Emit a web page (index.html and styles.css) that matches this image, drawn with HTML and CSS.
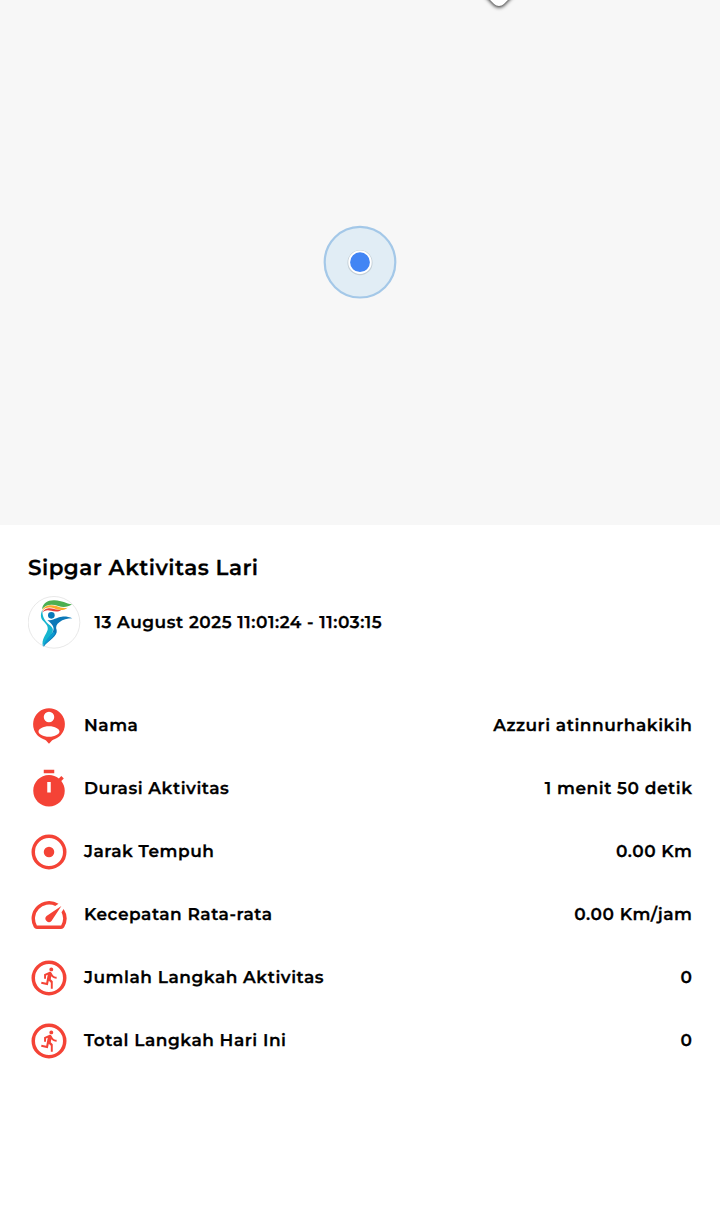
FILE: index.html
```html
<!DOCTYPE html>
<html lang="id">
<head>
<meta charset="utf-8">
<title>Sipgar Aktivitas Lari</title>
<link rel="stylesheet" href="styles.css">
</head>
<body>

<div class="map">
	<div class="pin"></div>
	<svg class="here" viewBox="0 0 76 76">
		<circle class="accuracy" cx="38" cy="37.2" r="35.3"/>
		<circle class="shadow" cx="38" cy="37.7" r="12.6"/>
		<circle class="dot" cx="38" cy="37.2" r="10.8"/>
	</svg>
</div>

<div class="detail">
	<h1>Sipgar Aktivitas Lari</h1>

	<div class="head">
		<svg class="logo" viewBox="-18 0 157.5 157.5">
			<circle cx="60" cy="79" r="77.5" fill="#fff" stroke="#ddd" stroke-width="2"/>
			<g transform="translate(-2 1)">
				<path d="M26 39C29 19 44 11 64 12C86 13 98 22 116 24C103 33 89 34 75 29C55 23 38 24 26 39z" fill="#4caf50"/>
				<path d="M26 44C34 25 52 24 69 29C81 33 90 37 103 34C93 43 80 42 67 38C49 31 36 32 26 44z" fill="#fbab2c"/>
				<path d="M26 50C33 34 49 34 60 37C68 39 75 42 84 40C75 48 64 46 54 43C42 40 33 41 26 50z" fill="#e5403a"/>
				<path d="M27 40C22 52 20 63 29 73C38 82 45 89 43 100C39 115 23 128 29 151C31 139 44 130 53 116C63 101 59 95 50 87C36 77 26 61 27 40z" fill="#16b5cf"/>
				<path d="M42 72C57 73 70 63 86 61C97 60 107 62 117 66C101 66 89 70 79 77C69 84 66 92 70 102C74 119 46 132 31 151C31 137 47 124 57 109C65 96 60 85 42 72z" fill="#0b78b8"/>
				<path d="M60 106C51 121 33 131 29 151C41 135 61 124 65 110z" fill="#0a9bd0"/>
				<circle cx="54" cy="57" r="10" fill="#0b78b8"/>
			</g>
		</svg>
		<span>13 August 2025 11:01:24 - 11:03:15</span>
	</div>

	<ul class="list">
		<li>
			<svg class="icon" viewBox="0 0 24 24"><path fill-rule="evenodd" d="M12 1.9a9.1 9.1 0 0 0-3.1 17.65c.6.2 1 .35 1.4.75L12 22.1l1.7-1.8c.4-.4.8-.55 1.4-.75A9.1 9.1 0 0 0 12 1.9zM12 3.9a3 3 0 1 1 0 6 3 3 0 0 1 0-6zM12 12.1c3.4 0 6 1.5 6 3s-2.6 3-6 3-6-1.5-6-3 2.6-3 6-3z"/></svg>
			<span>Nama</span>
			<span class="val">Azzuri atinnurhakikih</span>
		</li>
		<li>
			<svg class="icon" viewBox="0 0 24 24"><path fill-rule="evenodd" d="M15 1H9v2h6V1zm-4 13h2V8h-2v6zm8.03-6.61 1.42-1.42c-.43-.51-.9-.99-1.41-1.41l-1.42 1.42C16.07 4.74 14.12 4 12 4c-4.97 0-9 4.03-9 9s4.02 9 9 9 9-4.03 9-9c0-2.12-.74-4.07-1.97-5.61z"/></svg>
			<span>Durasi Aktivitas</span>
			<span class="val">1 menit 50 detik</span>
		</li>
		<li>
			<svg class="icon" viewBox="0 0 24 24"><circle class="ring" cx="12" cy="12" r="9"/><circle cx="12" cy="12" r="3"/></svg>
			<span>Jarak Tempuh</span>
			<span class="val">0.00 Km</span>
		</li>
		<li>
			<svg class="icon" viewBox="0 0 24 24"><path d="m20.38 8.57-1.23 1.85a8 8 0 0 1-.22 7.58H5.07A8 8 0 0 1 15.58 6.85l1.85-1.23A10 10 0 0 0 3.35 19a2 2 0 0 0 1.72 1h13.85a2 2 0 0 0 1.74-1 10 10 0 0 0-.27-10.44zm-9.79 6.84a2 2 0 0 0 2.83 0l5.66-8.49-8.49 5.66a2 2 0 0 0 0 2.83z"/></svg>
			<span>Kecepatan Rata-rata</span>
			<span class="val">0.00 Km/jam</span>
		</li>
		<li>
			<svg class="icon" viewBox="0 0 24 24"><circle class="ring" cx="12" cy="12" r="9"/><path transform="translate(5.9 5.1) scale(.55 .567)" d="M13.49 5.48c1.1 0 2-.9 2-2s-.9-2-2-2-2 .9-2 2 .9 2 2 2zm-3.6 13.9 1-4.4 2.1 2v6h2v-7.5l-2.1-2 .6-3c1.3 1.5 3.3 2.5 5.5 2.5v-2c-1.9 0-3.5-1-4.3-2.4l-1-1.6c-.4-.6-1-1-1.7-1-.3 0-.5.1-.8.1l-5.2 2.2v4.7h2v-3.4l1.8-.7-1.6 8.1-4.9-1-.4 2 7 1.4z"/></svg>
			<span>Jumlah Langkah Aktivitas</span>
			<span class="val">0</span>
		</li>
		<li>
			<svg class="icon" viewBox="0 0 24 24"><circle class="ring" cx="12" cy="12" r="9"/><path transform="translate(5.9 5.1) scale(.55 .567)" d="M13.49 5.48c1.1 0 2-.9 2-2s-.9-2-2-2-2 .9-2 2 .9 2 2 2zm-3.6 13.9 1-4.4 2.1 2v6h2v-7.5l-2.1-2 .6-3c1.3 1.5 3.3 2.5 5.5 2.5v-2c-1.9 0-3.5-1-4.3-2.4l-1-1.6c-.4-.6-1-1-1.7-1-.3 0-.5.1-.8.1l-5.2 2.2v4.7h2v-3.4l1.8-.7-1.6 8.1-4.9-1-.4 2 7 1.4z"/></svg>
			<span>Total Langkah Hari Ini</span>
			<span class="val">0</span>
		</li>
	</ul>
</div>

</body>
</html>
```
FILE: styles.css
```css
body {
	margin: 0;
	background-color: #fff;
	color: #000;
	font-family: Montserrat, Inter, sans-serif;
	font-size: 17px;
	font-weight: 600;
	letter-spacing: 0.52px;
	-webkit-text-stroke: 0.25px #000;
	text-rendering: geometricPrecision;
}

.map {
	height: 525px;
	background-color: #f7f7f7;
	position: relative;
	overflow: hidden;
	display: flex;
	align-items: center;
	justify-content: center;
}

/* tip of the marker hanging in from above the map */
.pin {
	width: 24px;
	height: 24px;
	border-radius: 7px;
	background-color: #fff;
	box-shadow: 1px 1px 4px rgba(0, 0, 0, 0.8);
	position: absolute;
	top: -20px;
	left: 487px;
	transform: rotate(45deg);
}

.here {
	width: 76px;
	height: 76px;
}

.accuracy {
	fill: #e1edf5;
	stroke: #a4c8e8;
	stroke-width: 2.2;
}

.shadow {
	fill: #000;
	opacity: 0.12;
}

.dot {
	fill: #4285f4;
	stroke: #fff;
	stroke-width: 1.8;
}

.detail {
	padding: 28px;
}

h1 {
	margin: 0;
	font-size: 21.5px;
	font-weight: 600;
	line-height: 30px;
	letter-spacing: 0.45px;
}

.head {
	display: flex;
	align-items: center;
	gap: 14px;
	margin-top: 13px;
	height: 53px;
}

.logo {
	width: 52.5px;
	height: 52.5px;
}

.list {
	margin: 56px 0 0;
	padding: 0;
	list-style: none;
}

.list li {
	display: flex;
	align-items: center;
	height: 42px;
	margin-bottom: 21px;
}

.list span {
	padding-bottom: 1px;
}

.icon {
	width: 42px;
	height: 42px;
	margin-right: 14px;
	fill: #f44336;
}

.ring {
	fill: none;
	stroke: #f44336;
	stroke-width: 2;
}

/* drops the spacing after the last letter */
.list .val {
	margin-left: auto;
	margin-right: -0.5px;
}
```
